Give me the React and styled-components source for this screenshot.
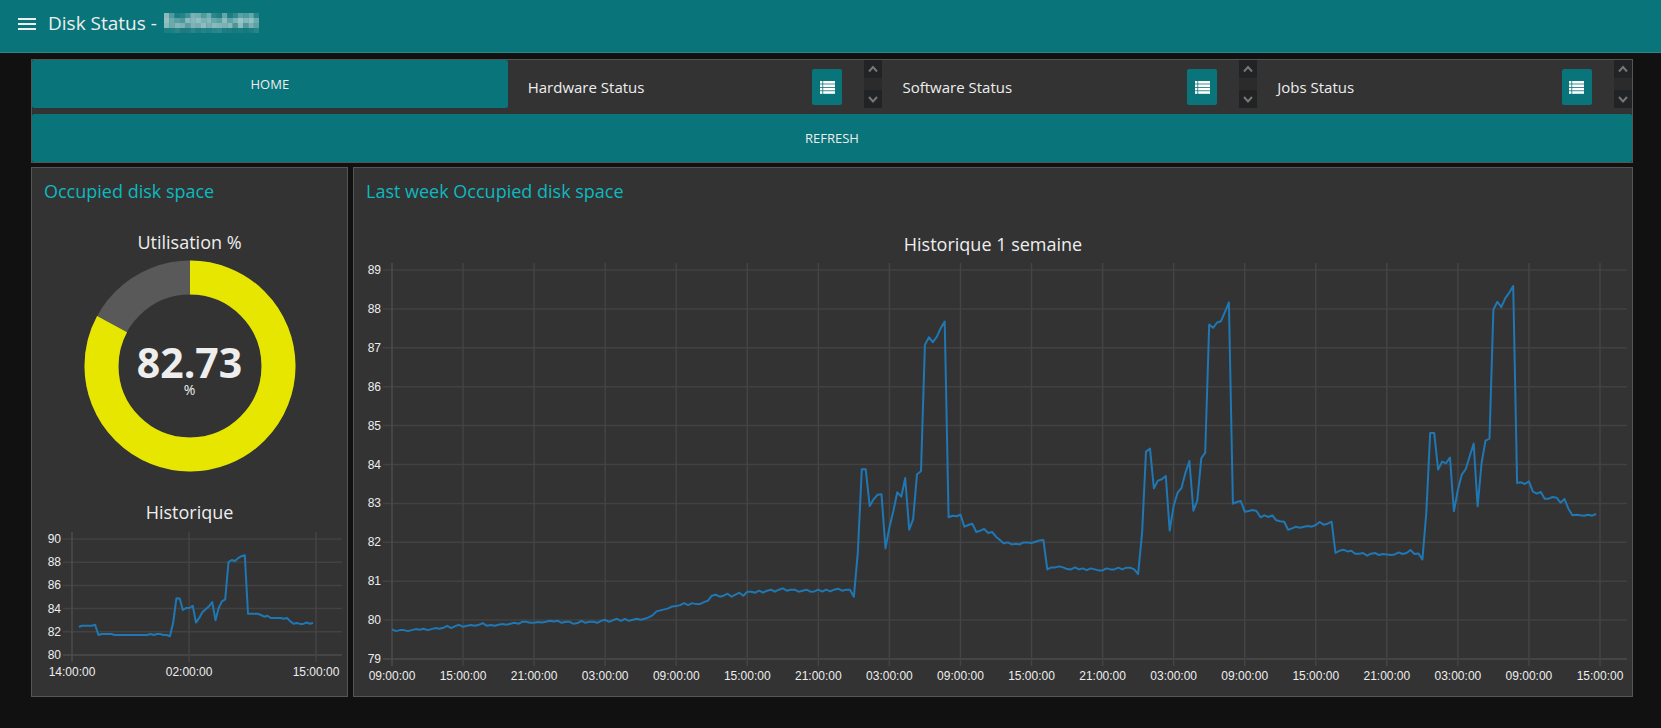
import React, { useLayoutEffect, useRef, useState } from "react";
import styled, { createGlobalStyle } from "styled-components";

const GlobalStyle = createGlobalStyle`
  *, *::before, *::after { box-sizing: border-box; }
  body {
    margin: 0;
    background: #111;
    color: #eee;
    font-family: "Open Sans", "Noto Sans", sans-serif;
    font-size: 14px;
  }
`;

const TEAL = "#097479";

/* ---------- data ---------- */

// Samples are raw counts taken every 20 minutes; `zero` is the count at 80 %.
const COUNTS_PER_PERCENT = 116.6;
const decode = (zero, samples) =>
  samples.map((s) => 80 + (zero - s) / COUNTS_PER_PERCENT);

const WEEK = [
  ...decode(182, [
    210, 215, 212, 212, 215, 212, 209, 211, 208, 212, 209, 206, 208, 205, 199,
    206, 200, 196, 202, 199, 197, 199, 196, 191, 199, 197, 199, 196, 194, 196,
    193, 190, 193, 187, 187, 190, 190, 188, 189, 187, 184, 186, 184, 190, 187,
    187, 193, 191, 184, 190, 187, 187, 190, 184, 181, 187, 182, 178, 184, 178,
    184, 181, 178, 181, 178, 174, 168, 156, 153, 150, 147, 141, 140, 137, 131,
    137, 131, 134, 134, 128, 124, 109, 106, 112, 109, 103, 112, 106, 100, 109,
    97, 97, 100, 94, 100, 94, 91, 97, 91, 87, 94, 91, 91, 97, 94, 91, 97, 96,
    91, 97, 91, 96, 91, 88, 94, 91, 91, 112,
  ]),
  ...decode(962, [
    760, 510, 510, 620, 600, 586, 585, 747, 684, 634, 579, 592, 536, 691, 660,
    525, 516, 137, 114, 129, 113, 87, 67, 654, 649, 651, 646, 682, 677, 673,
    698, 694, 689, 701, 698, 712, 722, 732, 729, 735, 733, 735, 729, 729, 731,
    727, 723, 722, 810, 804, 804, 801, 804, 809, 810, 804, 810, 807, 812, 807,
    810, 813,
  ]),
  ...decode(1022, [
    873, 867, 870, 870, 865, 870, 865, 865, 870, 884, 760, 517, 508, 627, 604,
    600, 590, 754, 680, 640, 626, 580, 545, 694, 664, 537, 520, 136, 146, 130,
    126, 98, 70, 673, 668, 665, 697, 695, 692, 695, 714, 708, 713, 708, 723,
    726, 727, 751, 747, 742, 745, 742, 740, 742, 737, 728, 736, 733, 727, 821,
    814, 811, 816, 814, 823, 823, 821, 829, 823, 821, 827,
  ]),
  ...decode(1081, [
    883, 884, 886, 884, 878, 883, 880, 871, 883, 881, 899, 760, 520, 520, 630,
    606, 611, 594, 755, 690, 645, 628, 590, 552, 740, 610, 543, 537, 150, 127,
    143, 116, 100, 80, 670, 668, 673, 665, 696, 702, 697, 717, 717, 712, 714,
    729, 718, 747, 767, 765, 767, 768, 765, 768, 763,
  ]),
];

const DAY = [
  82.44, 82.53, 82.53, 82.53, 82.53, 82.6, 81.72, 81.81, 81.81, 81.81, 81.81,
  81.72, 81.72, 81.72, 81.72, 81.72, 81.72, 81.72, 81.72, 81.72, 81.72, 81.72,
  81.81, 81.72, 81.81, 81.81, 81.72, 81.72, 81.61, 82.79, 84.89, 84.87, 83.88,
  84.05, 84.05, 84.25, 82.79, 83.2, 83.7, 83.95, 84.2, 84.57, 82.99, 84.05,
  84.63, 84.8, 88.02, 88.19, 88.1, 88.35, 88.53, 88.6, 83.56, 83.56, 83.56,
  83.56, 83.45, 83.3, 83.39, 83.19, 83.19, 83.19, 83.19, 83.12, 83.19, 82.9,
  82.7, 82.76, 82.68, 82.68, 82.8, 82.7, 82.75,
];

const WEEK_TICKS = Array.from({ length: 18 }, (_, i) => ({
  hour: i * 6,
  label: ["09", "15", "21", "03"][i % 4] + ":00:00",
}));

const DAY_TICKS = [
  { hour: 0, label: "14:00:00" },
  { hour: 12, label: "02:00:00" },
  { hour: 25, label: "15:00:00" },
];

/* ---------- header ---------- */

const Header = styled.header`
  display: flex;
  align-items: flex-start;
  gap: 9px;
  height: 53px;
  padding: 8px 15px;
  background: ${TEAL};
  border-bottom: 1px solid #2b8589;
`;

const MenuButton = styled.button`
  display: flex;
  align-items: center;
  justify-content: center;
  width: 24px;
  height: 32px;
  padding: 0;
  border: 0;
  background: none;
  color: #eee;
`;

const PageTitle = styled.h1`
  display: flex;
  align-items: center;
  gap: 7px;
  margin: 0;
  font-size: 19px;
  font-weight: 400;
  line-height: 30px;
`;

const MOSAIC = [
  "8ab9bb 4f9a9e 1d7e82 22848a 3f9196 7bb2b4 6faeb1 4e9a9d 6dafb1 2a878b 1e8085 66a6a9 1c7e82 2f8a8e 5aa2a5 4f9ca0 63a9ac 2a878b",
  "93c1c2 6ca9ac 59a0a4 4e979b 8cb9bf 84b8bb 90bfc1 7db0b4 86b9bb 6aa7ab 5ba1a4 8cbcbe 5ea4a7 7bb2b5 99c5c6 85b8bb 93c1c2 6dabae",
  "87bbbd 6ca9ac 82b6b8 7cb2b5 5c9da3 7fb2b6 76adb0 8dbdbf 79afb3 88b9bc 80b6b8 7ab1b3 86b9bb 4c969a 8bbcbe 4f989c 78b1b3 5ca2a5",
  "1d7e82 1f8084 29858a 20797f 1b7c81 27848a 1d7e82 24828a 1f8085 28868a 2a878b 1d7e82 1b7d81 15797d 1b7d81 15797d 1b7d81 26858a",
].map((row) => row.split(" "));

const Mosaic = styled.svg`
  display: block;
  width: 95px;
  height: 20px;
`;

function HiddenName() {
  return (
    <Mosaic viewBox="0 0 90 20" preserveAspectRatio="none" aria-hidden="true">
      {MOSAIC.map((row, y) =>
        row.map((c, x) => (
          <rect key={`${x}-${y}`} x={x * 5} y={y * 5} width="5.2" height="5.2" fill={`#${c}`} />
        ))
      )}
    </Mosaic>
  );
}

/* ---------- dashboard layout ---------- */

const Dashboard = styled.main`
  display: flex;
  flex-direction: column;
  gap: 4px;
  padding: 6px 28px 31px 31px;
`;

const Group = styled.section`
  min-width: 0;
  background: #333;
  border: 1px solid #555;
`;

const NavGroup = styled(Group)`
  display: flex;
  flex-direction: column;
  gap: 6px;
`;

const NavRow = styled.div`
  display: grid;
  grid-template-columns: 129fr 100fr 100fr 100fr;
  gap: 6px;
`;

const WideButton = styled.button`
  height: 48px;
  padding: 0;
  border: 0;
  border-radius: 2px;
  background: ${TEAL};
  color: #eee;
  font: inherit;
  font-size: 13px;
  text-transform: uppercase;
`;

const StatusList = styled.div`
  display: flex;
  align-items: flex-start;
  height: 48px;
  padding-left: 14px;
`;

const StatusLabel = styled.span`
  flex: 1;
  line-height: 54px;
  font-size: 15px;
`;

const ListButton = styled.button`
  display: flex;
  align-items: center;
  justify-content: center;
  width: 30px;
  height: 36px;
  margin: 9px 22px 0 0;
  padding: 0;
  border: 0;
  border-radius: 2px;
  background: ${TEAL};
  color: #fff;
`;

const ScrollTrack = styled.div`
  display: flex;
  flex-direction: column;
  justify-content: space-between;
  width: 18px;
  height: 48px;
  background: #2b2b2b;
`;

const ScrollButton = styled.button`
  display: flex;
  align-items: center;
  justify-content: center;
  height: 18px;
  padding: 0;
  border: 0;
  background: #222325;
  color: #777;
`;

const Chevron = ({ up }) => (
  <svg width="10" height="8" viewBox="0 0 10 8" fill="none" stroke="currentColor" strokeWidth="2" aria-hidden="true">
    <path d={up ? "M1 6.5 L5 2 L9 6.5" : "M1 2 L5 6.5 L9 2"} />
  </svg>
);

const ListIcon = () => (
  <svg width="15" height="13" viewBox="0 0 15 13" fill="currentColor" aria-hidden="true">
    {[0, 3.4, 6.8, 10.2].map((y) => (
      <React.Fragment key={y}>
        <rect x="0" y={y} width="2.4" height="2.6" />
        <rect x="3.2" y={y} width="11.8" height="2.6" />
      </React.Fragment>
    ))}
  </svg>
);

function StatusMenu({ name }) {
  return (
    <StatusList>
      <StatusLabel>{name}</StatusLabel>
      <ListButton aria-label={`Open ${name}`}>
        <ListIcon />
      </ListButton>
      <ScrollTrack>
        <ScrollButton aria-label={`Scroll ${name} up`}><Chevron up /></ScrollButton>
        <ScrollButton aria-label={`Scroll ${name} down`}><Chevron /></ScrollButton>
      </ScrollTrack>
    </StatusList>
  );
}

const Panels = styled.div`
  display: grid;
  grid-template-columns: 317px 1fr;
  gap: 5px;
`;

const Panel = styled(Group)`
  display: flex;
  flex-direction: column;
  min-height: 530px;
`;

const PanelTitle = styled.h2`
  margin: 0;
  padding: 8px 12px;
  color: #0eb8c0;
  font-size: 18px;
  font-weight: 400;
  line-height: 30px;
`;

const WidgetTitle = styled.h3`
  margin: 0;
  font-size: 18px;
  font-weight: 400;
  line-height: 24px;
  text-align: center;
`;

const GaugeTitle = styled(WidgetTitle)`
  padding-top: 16px;
`;

const DayTitle = styled(WidgetTitle)`
  padding-top: 28px;
`;

const WeekTitle = styled(WidgetTitle)`
  padding-top: 18px;
`;

/* ---------- gauge ---------- */

const GaugeBox = styled.div`
  display: grid;
  place-items: center;
  padding-top: 6px;
  & > * { grid-area: 1 / 1; }
`;

const Reading = styled.div`
  display: flex;
  flex-direction: column;
  align-items: center;
  padding-top: 8px;
`;

const ReadingValue = styled.strong`
  font-size: 41px;
  font-weight: 700;
  line-height: 40px;
`;

const ReadingUnit = styled.span`
  font-size: 14px;
  line-height: 16px;
`;

function Gauge({ value }) {
  const r = 88.5;
  const length = 2 * Math.PI * r;
  return (
    <GaugeBox>
      <svg width="212" height="212" viewBox="-106 -106 212 212" fill="none" strokeWidth="34" aria-hidden="true">
        <circle r={r} stroke="#595959" />
        <circle
          r={r}
          stroke="#e6e600"
          strokeDasharray={`${(length * value) / 100} ${length}`}
          transform="rotate(-90)"
        />
      </svg>
      <Reading>
        <ReadingValue>{value.toFixed(2)}</ReadingValue>
        <ReadingUnit>%</ReadingUnit>
      </Reading>
    </GaugeBox>
  );
}

/* ---------- line chart ---------- */

const ChartBox = styled.div`
  min-width: 0;
  overflow: hidden;
`;

const ChartSvg = styled.svg`
  display: block;
  width: 100%;
  height: ${(p) => p.$height}px;
  font-family: "Liberation Sans", Arial, sans-serif;
  font-size: 12px;
  fill: #eee;
`;

function LineChart({ label, values, start, ticks, hours, min, max, step, height, top, bottom, left, right }) {
  const box = useRef(null);
  const [width, setWidth] = useState(300);

  useLayoutEffect(() => {
    const measure = () => setWidth(box.current.clientWidth);
    measure();
    const observer = new ResizeObserver(measure);
    observer.observe(box.current);
    return () => observer.disconnect();
  }, []);

  const gridEnd = width - 5;
  const x = (hour) => left + (hour / hours) * (width - right - left);
  const y = (v) => bottom - ((v - min) / (max - min)) * (bottom - top);
  const levels = [];
  for (let v = min; v <= max; v += step) levels.push(v);
  const line = values
    .map((v, i) => `${x(start + i / 3).toFixed(1)},${y(v).toFixed(1)}`)
    .join(" ");

  return (
    <ChartBox ref={box}>
      <ChartSvg $height={height} role="img" aria-label={label}>
        {levels.map((v) => (
          <g key={v}>
            <line x1={left - 9} x2={gridEnd} y1={y(v)} y2={y(v)} stroke={v === min ? "#4d4d4d" : "#424242"} strokeWidth="1.5" />
            <text x={left - 11} y={Math.round(y(v)) + 4} textAnchor="end">{v}</text>
          </g>
        ))}
        {ticks.map((t) => (
          <g key={t.hour}>
            <line x1={x(t.hour)} x2={x(t.hour)} y1={top - 7} y2={bottom + 7} stroke={t.hour === 0 ? "#4d4d4d" : "#444"} strokeWidth="1.5" />
            <text x={x(t.hour)} y={bottom + 21} textAnchor="middle">{t.label}</text>
          </g>
        ))}
        <polyline points={line} fill="none" stroke="#1f77b4" strokeWidth="2" strokeLinejoin="round" />
      </ChartSvg>
    </ChartBox>
  );
}

/* ---------- page ---------- */

export default function App() {
  return (
    <>
      <GlobalStyle />
      <Header>
        <MenuButton aria-label="Menu">
          <svg width="18" height="12" viewBox="0 0 18 12" fill="currentColor" aria-hidden="true">
            <path d="M0 0h18v2H0zM0 5h18v2H0zM0 10h18v2H0z" />
          </svg>
        </MenuButton>
        <PageTitle>
          Disk Status -
          <HiddenName />
        </PageTitle>
      </Header>
      <Dashboard>
        <NavGroup as="nav">
          <NavRow>
            <WideButton>Home</WideButton>
            <StatusMenu name="Hardware Status" />
            <StatusMenu name="Software Status" />
            <StatusMenu name="Jobs Status" />
          </NavRow>
          <WideButton>Refresh</WideButton>
        </NavGroup>
        <Panels>
          <Panel>
            <PanelTitle>Occupied disk space</PanelTitle>
            <GaugeTitle>Utilisation %</GaugeTitle>
            <Gauge value={82.73} />
            <DayTitle>Historique</DayTitle>
            <LineChart
              label="Historique"
              values={DAY}
              start={0.7}
              ticks={DAY_TICKS}
              hours={25}
              min={80}
              max={90}
              step={2}
              height={160}
              top={15}
              bottom={131}
              left={40}
              right={31}
            />
          </Panel>
          <Panel>
            <PanelTitle>Last week Occupied disk space</PanelTitle>
            <WeekTitle>Historique 1 semaine</WeekTitle>
            <LineChart
              label="Historique 1 semaine"
              values={WEEK}
              start={0}
              ticks={WEEK_TICKS}
              hours={102}
              min={79}
              max={89}
              step={1}
              height={430}
              top={14}
              bottom={403}
              left={38}
              right={32}
            />
          </Panel>
        </Panels>
      </Dashboard>
    </>
  );
}
